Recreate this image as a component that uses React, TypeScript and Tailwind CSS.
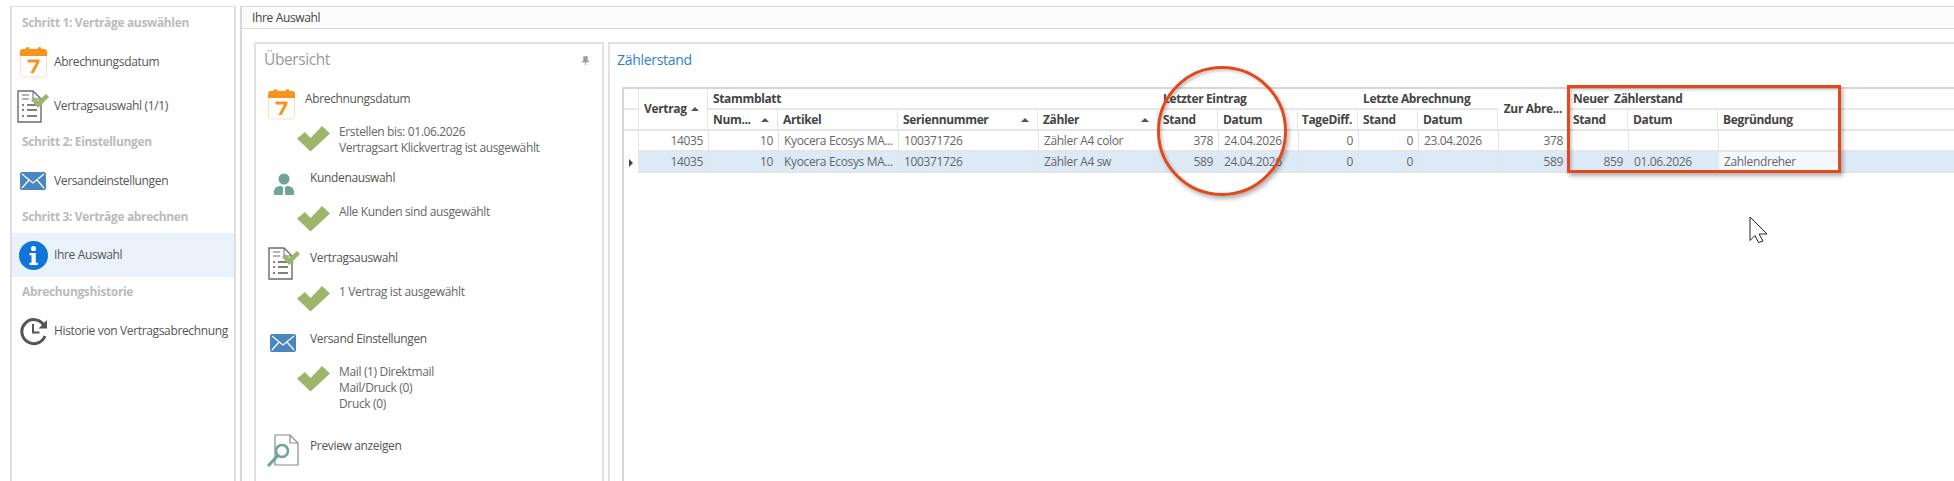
import React from "react";

const CalendarIcon = () => (
  <svg width="27" height="32" viewBox="0 0 27 32">
    <rect x="0.5" y="3" width="26" height="28" rx="3" fill="#fff" stroke="#fde0bd" />
    <path d="M0 10V6a3 3 0 0 1 3-3h2.500a2 2 0 0 1 4 0h8a2 2 0 0 1 4 0H24a3 3 0 0 1 3 3v4z" fill="#f7941d" />
    <path d="M7.500 13.500h12v2.600L13.800 27h-3.400l5.600-10.600H7.500z" fill="#f7941d" />
  </svg>
);

const ContractIcon = () => (
  <svg width="32" height="33" viewBox="0 0 32 33">
    <path d="M1 1h15l8 8v23H1z" fill="#fff" stroke="#6b6b6b" strokeWidth="1.400" />
    <path d="M16 1v8h8" fill="none" stroke="#6b6b6b" strokeWidth="1" />
    <path d="M5 5h7M5 9h7" stroke="#6b6b6b" strokeWidth="1.200" />
    <path d="M5 15h2M10 15h10M5 20h2M10 20h10M5 26h2M10 26h10" stroke="#555" strokeWidth="1.300" />
    <path d="M14 10l3-3 4 4 8-7 3 3-11 11z" fill="#9db56b" />
  </svg>
);

const MailIcon = () => (
  <svg width="26" height="18" viewBox="0 0 26 18">
    <rect width="26" height="18" rx="2" fill="#4a86bf" />
    <path d="M2 2l11 9 11-9M2 16l7-8M24 16l-7-8" fill="none" stroke="#fff" strokeWidth="1.200" />
  </svg>
);

const PersonIcon = () => (
  <svg width="20" height="22" viewBox="0 0 20 22">
    <circle cx="10" cy="6" r="5.500" fill="#6fa597" />
    <path d="M0 22v-3c0-4 3-6 7-6l3 2 3-2c4 0 7 2 7 6v3z" fill="#6fa597" />
    <path d="M9.300 14h1.400l.6 8H8.700z" fill="#fff" />
  </svg>
);

const CheckIcon = () => (
  <svg width="33" height="26" viewBox="0 0 33 26">
    <path d="M0 12.500L8 6l5.500 6L25 0l8 7.500L13.500 25.500z" fill="#9db56b" />
  </svg>
);

const PreviewIcon = () => (
  <svg width="33" height="33" viewBox="0 0 33 33">
    <path d="M8 1h15l8 8v22H8z" fill="#fff" stroke="#8a8a8a" strokeWidth="1.200" />
    <path d="M23 1v8h8" fill="none" stroke="#8a8a8a" strokeWidth="1.200" />
    <circle cx="15" cy="17" r="6" fill="#fff" stroke="#6fa597" strokeWidth="2.600" />
    <path d="M10.500 22L2 31" stroke="#6fa597" strokeWidth="3.200" strokeLinecap="round" />
  </svg>
);

const InfoIcon = () => (
  <svg width="29" height="29" viewBox="0 0 29 29">
    <circle cx="14.500" cy="14.500" r="14.500" fill="#0f75d8" />
    <circle cx="14.500" cy="7.500" r="2.600" fill="#fff" />
    <path d="M10.500 12h6.300v9.800h2v2.200h-8.300v-2.200h2V14.200h-2z" fill="#fff" />
  </svg>
);

const HistoryIcon = () => (
  <svg width="29" height="30" viewBox="0 0 29 30">
    <path d="M24.500 8.500A12 12 0 1 0 26 20" fill="none" stroke="#555" strokeWidth="3" />
    <path d="M28 4v8.500h-8.500z" fill="#555" />
    <path d="M14 8v8.500h6.500" fill="none" stroke="#555" strokeWidth="2" />
  </svg>
);

const PinIcon = () => (
  <svg width="7" height="9" viewBox="0 0 8 10">
    <path d="M1.500 0h5v5.500H8V7H4.500v3h-1V7H0V5.500h1.500z" fill="#9a9a9a" />
  </svg>
);

const CursorIcon = () => (
  <svg width="19" height="28" viewBox="0 0 19 28">
    <path d="M1 1v23.500l5-5 3.500 7 4.500-1.500-4-7h8z" fill="#fff" stroke="#222" strokeWidth="1" />
  </svg>
);

const SortUp = () => <span className="h-0 w-0 shrink-0 border-x-[4px] border-b-[4px] border-x-transparent border-b-[#555]" />;

const SideHeading = ({ children, className }: { children: React.ReactNode; className: string }) => (
  <p className={`flex items-center pl-[10px] font-bold text-[#bbbbbb] ${className}`}>{children}</p>
);

const SideItem = ({ icon, label, active, className }: { icon: React.ReactNode; label: string; active?: boolean; className: string }) => (
  <div className={`flex h-[44px] items-center ${active ? "bg-[#e9f2fb]" : ""} ${className}`}>
    <div className="flex w-[42px] shrink-0 justify-center">{icon}</div>
    <span className="whitespace-nowrap text-[#555]">{label}</span>
  </div>
);

const Check = ({ lines, className }: { lines: string[]; className: string }) => (
  <div className={`flex pl-[41px] ${className}`}>
    <div className="w-[42px] shrink-0"><CheckIcon /></div>
    <div className="-mt-[2px] leading-[16px] text-[#666]">
      {lines.map((l) => <p key={l} className="whitespace-nowrap">{l}</p>)}
    </div>
  </div>
);

const cols = ["w-[70px]", "w-[70px]", "w-[120px]", "w-[140px]", "w-[120px]", "w-[60px]", "w-[80px]", "w-[60px]", "w-[60px]", "w-[80px]", "w-[70px]", "w-[60px]", "w-[90px]", "w-[120px]", "flex-1"];

const rows = [
  ["14035", "10", "Kyocera Ecosys MA...", "100371726", "Zähler A4 color", "378", "24.04.2026", "0", "0", "23.04.2026", "378", "", "", "", ""],
  ["14035", "10", "Kyocera Ecosys MA...", "100371726", "Zähler A4 sw", "589", "24.04.2026", "0", "0", "", "589", "859", "01.06.2026", "Zahlendreher", ""],
];
const rightAligned = [0, 1, 5, 7, 8, 10, 11];

const GroupTitle = ({ children }: { children: React.ReactNode }) => (
  <div className="flex h-[21px] items-center whitespace-pre border-b-2 border-[#e8e8e8] pl-[5px]">{children}</div>
);

const SubCell = ({ width, label, sort, right }: { width: string; label?: string; sort?: boolean; right?: boolean }) => (
  <div className={`flex items-center whitespace-nowrap border-r border-[#e5e5e5] pl-[5px] ${width} ${sort ? "justify-between pr-[8px]" : "pr-[5px]"} ${right ? "justify-end" : ""}`}>
    {label}
    {sort && <SortUp />}
  </div>
);

const Grid = () => (
  <div className="ml-[12px] mt-[13px] flex-1 border-l-2 border-t-2 border-[#d6d6d6]">
    <div className="flex h-[42px] border-b-2 border-[#e5e5e5] font-bold text-[#444]">
      <div className="w-[14px] shrink-0">
        <div className="h-[21px] border-b-2 border-[#e8e8e8]" />
      </div>
      <div className="flex w-[70px] shrink-0 items-center justify-between border-x border-[#e5e5e5] pl-[5px] pr-[8px]">Vertrag <SortUp /></div>
      <div className="flex w-[450px] shrink-0 flex-col">
        <GroupTitle>Stammblatt</GroupTitle>
        <div className="flex flex-1">
          <SubCell width="w-[70px]" label="Num..." sort />
          <SubCell width="w-[120px]" label="Artikel" />
          <SubCell width="w-[140px]" label="Seriennummer" sort />
          <SubCell width="w-[120px]" label="Zähler" sort />
        </div>
      </div>
      <div className="flex w-[200px] shrink-0 flex-col">
        <GroupTitle>Letzter Eintrag</GroupTitle>
        <div className="flex flex-1">
          <SubCell width="w-[60px]" label="Stand" />
          <SubCell width="w-[80px]" label="Datum" />
          <SubCell width="w-[60px]" label="TageDiff." right />
        </div>
      </div>
      <div className="flex w-[140px] shrink-0 flex-col">
        <GroupTitle>Letzte Abrechnung</GroupTitle>
        <div className="flex flex-1">
          <SubCell width="w-[60px]" label="Stand" />
          <SubCell width="w-[80px]" label="Datum" />
        </div>
      </div>
      <div className="flex w-[70px] shrink-0 items-center justify-end whitespace-nowrap border-r border-[#e5e5e5] pr-[5px]">Zur Abre...</div>
      <div className="flex flex-1 flex-col">
        <GroupTitle>Neuer  Zählerstand</GroupTitle>
        <div className="flex flex-1">
          <SubCell width="w-[60px]" label="Stand" />
          <SubCell width="w-[90px]" label="Datum" />
          <div className="flex items-center pl-[5px]">Begründung</div>
        </div>
      </div>
    </div>
    {rows.map((r, i) => (
      <div key={i} className="flex h-[21px]">
        <div className="flex w-[14px] shrink-0 items-center justify-center">
          {i === 1 && <span className="h-0 w-0 border-y-[4px] border-l-[4px] border-y-transparent border-l-[#444]" />}
        </div>
        <div className={`flex flex-1 border-b-2 border-l border-[#e5e5e5] ${i === 1 ? "bg-[#dce9f6]" : ""}`}>
          {r.map((c, j) => (
            <div
              key={j}
              className={`flex items-center overflow-hidden whitespace-nowrap px-[5px] text-[#666] ${cols[j]} ${j < 14 ? "shrink-0" : ""} ${j < 13 ? "border-r border-[#e5e5e5]" : ""} ${rightAligned.includes(j) ? "justify-end" : ""} ${j === 13 && i === 1 ? "bg-[#f4f8fc]" : ""}`}
            >
              {c}
            </div>
          ))}
        </div>
      </div>
    ))}
  </div>
);

export default function App() {
  return (
    <div className="relative flex h-[481px] w-[1954px] overflow-hidden bg-white pl-[10px] pt-[6px] font-['Open_Sans',sans-serif] text-[12px] tracking-[-0.35px]">
      <aside className="mr-[4px] flex h-[500px] w-[226px] shrink-0 flex-col border-x-2 border-t border-[#dedede]">
        <SideHeading className="h-[32px]">Schritt 1: Verträge auswählen</SideHeading>
        <SideItem className="mt-[1px]" icon={<CalendarIcon />} label="Abrechnungsdatum" />
        <SideItem className="" icon={<ContractIcon />} label="Vertragsauswahl (1/1)" />
        <SideHeading className="h-[28px]">Schritt 2: Einstellungen</SideHeading>
        <SideItem className="mt-[3px]" icon={<MailIcon />} label="Versandeinstellungen" />
        <SideHeading className="h-[28px]">Schritt 3: Verträge abrechnen</SideHeading>
        <SideItem active className="mt-[2px]" icon={<InfoIcon />} label="Ihre Auswahl" />
        <SideHeading className="h-[30px]">Abrechungshistorie</SideHeading>
        <SideItem className="mt-[2px]" icon={<HistoryIcon />} label="Historie von Vertragsabrechnung" />
      </aside>

      <main className="flex min-w-0 flex-1 flex-col border-l-2 border-t border-[#d9d9d9]">
        <div className="flex h-[22px] shrink-0 items-center border-b border-[#d9d9d9] bg-[#fcfcfc] pl-[10px] text-[#444]">Ihre Auswahl</div>
        <div className="flex flex-1 pl-[12px] pt-[13px]">
          <section className="h-[500px] w-[350px] shrink-0 border-x-2 border-t-2 border-[#e2e2e2]">
            <div className="flex h-[32px] items-center justify-between pl-[8px] pr-[13px]">
              <h2 className="text-[15.500px] tracking-[-0.4px] text-[#9a9a9a]">Übersicht</h2>
              <PinIcon />
            </div>
            <div className="mt-[12px] flex h-[32px] pl-[12px] leading-[22px] text-[#555]"><div className="w-[37px]"><CalendarIcon /></div>Abrechnungsdatum</div>
            <Check className="mt-[6px]" lines={["Erstellen bis: 01.06.2026", "Vertragsart Klickvertrag ist ausgewählt"]} />
            <div className="mt-[17px] flex h-[21px] pl-[18px] text-[#555]"><div className="w-[36px]"><PersonIcon /></div><span className="-mt-[3px] leading-[16px]">Kundenauswahl</span></div>
            <Check className="mt-[12px]" lines={["Alle Kunden sind ausgewählt"]} />
            <div className="mt-[15px] flex h-[32px] pl-[12px] leading-[22px] text-[#555]"><div className="w-[42px]"><ContractIcon /></div>Vertragsauswahl</div>
            <Check className="mt-[7px]" lines={["1 Vertrag ist ausgewählt"]} />
            <div className="mt-[22px] flex h-[17px] pl-[14px] text-[#555]"><div className="w-[40px]"><MailIcon /></div><span className="-mt-[3px] leading-[16px]">Versand Einstellungen</span></div>
            <Check className="mt-[15px]" lines={["Mail (1) Direktmail", "Mail/Druck (0)", "Druck (0)"]} />
            <div className="mt-[22px] flex pl-[11px] leading-[24px] text-[#555]"><div className="w-[43px]"><PreviewIcon /></div>Preview anzeigen</div>
          </section>
          <section className="ml-[4px] flex min-w-0 flex-1 flex-col border-l-2 border-t-2 border-[#e2e2e2]">
            <h2 className="flex h-[30px] items-center pl-[7px] text-[14px] tracking-[-0.3px] text-[#2f7fce]">Zählerstand</h2>
            <Grid />
          </section>
        </div>
      </main>

      {/* annotations drawn on top of the screenshot */}
      <div className="absolute left-[1157px] top-[66px] h-[130px] w-[130px] rounded-full border-[3px] border-[#e2491b] shadow-[2px_3px_4px_rgba(0,0,0,0.3),inset_2px_2px_3px_rgba(0,0,0,0.2)]" />
      <div className="absolute left-[1567px] top-[85px] h-[88px] w-[274px] border-[3px] border-[#e2491b] shadow-[2px_3px_4px_rgba(0,0,0,0.3),inset_2px_2px_3px_rgba(0,0,0,0.2)]" />
      <div className="absolute left-[1749px] top-[216px]"><CursorIcon /></div>
    </div>
  );
}
